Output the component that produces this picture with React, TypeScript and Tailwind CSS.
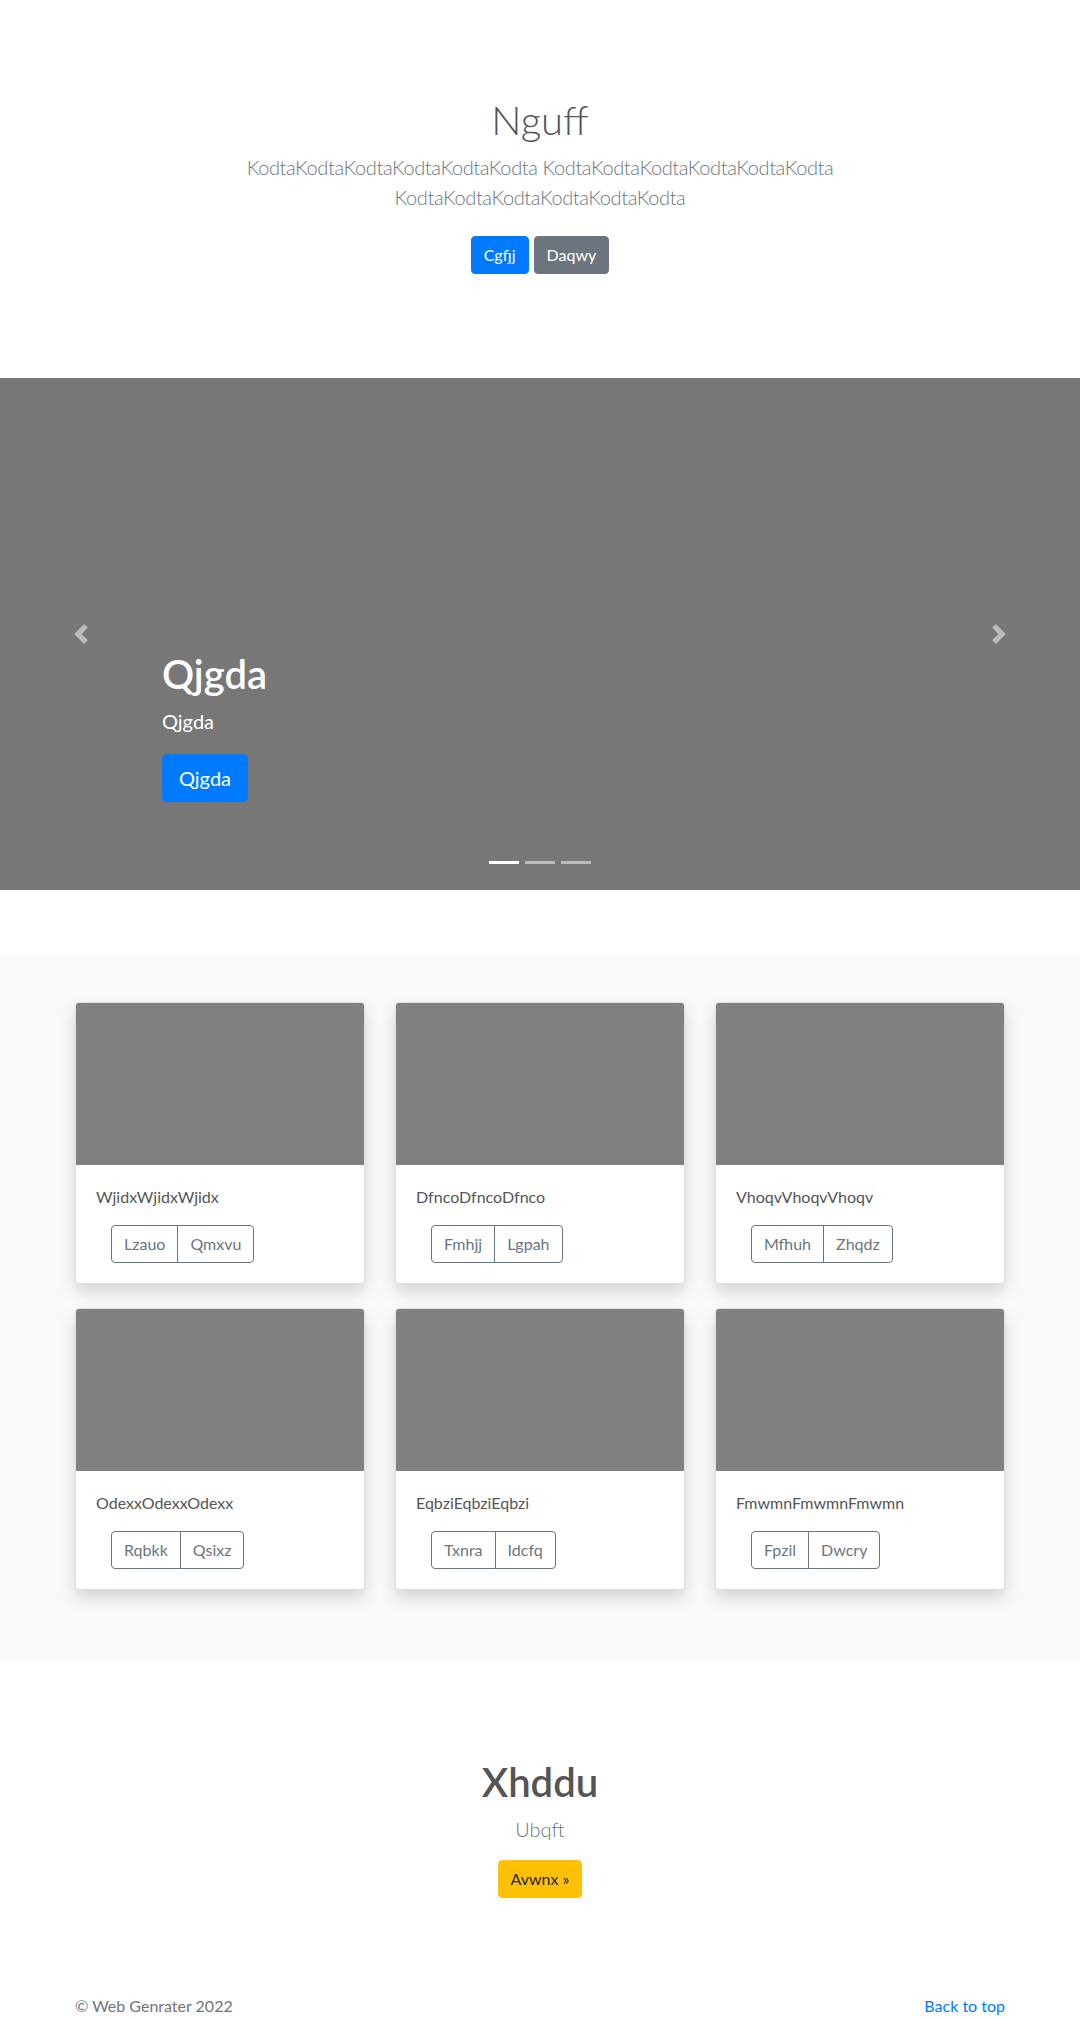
import React from 'react';

const cards = [
  { text: 'WjidxWjidxWjidx', a: 'Lzauo', b: 'Qmxvu' },
  { text: 'DfncoDfncoDfnco', a: 'Fmhjj', b: 'Lgpah' },
  { text: 'VhoqvVhoqvVhoqv', a: 'Mfhuh', b: 'Zhqdz' },
  { text: 'OdexxOdexxOdexx', a: 'Rqbkk', b: 'Qsixz' },
  { text: 'EqbziEqbziEqbzi', a: 'Txnra', b: 'Idcfq' },
  { text: 'FmwmnFmwmnFmwmn', a: 'Fpzil', b: 'Dwcry' },
];

const App: React.FC = () => {
  return (
    <div className="min-h-screen bg-white font-['Lato','Noto_Sans',sans-serif] text-[#212529]">
      {/* Intro */}
      <section className="pt-24 pb-24 text-center">
        <div className="max-w-[680px] mx-auto px-[15px]">
          <h1 className="text-[40px] leading-[48px] font-light text-[#555] mb-2">Nguff</h1>
          <p className="text-[20px] leading-[30px] font-light tracking-[-0.4px] text-[#6c757d] mb-4">
            KodtaKodtaKodtaKodtaKodtaKodta KodtaKodtaKodtaKodtaKodtaKodta KodtaKodtaKodtaKodtaKodtaKodta
          </p>
          <div className="flex justify-center gap-[5px] py-2">
            <a className="px-3 py-[6px] text-[16px] leading-6 rounded-[4px] border border-[#007bff] bg-[#007bff] text-white">Cgfjj</a>
            <a className="px-3 py-[6px] text-[16px] leading-6 rounded-[4px] border border-[#6c757d] bg-[#6c757d] text-white">Daqwy</a>
          </div>
        </div>
      </section>

      {/* Carousel */}
      <section className="relative h-[512px] bg-[#777] mb-16 overflow-hidden">
        <div className="absolute left-0 top-0 bottom-0 w-[15%] flex items-center justify-center opacity-50">
          <svg width="20" height="20" viewBox="0 0 8 8" fill="#fff">
            <path d="M5.25 0l-4 4 4 4 1.5-1.5L4.25 4l2.5-2.5L5.25 0z" />
          </svg>
        </div>
        <div className="absolute right-0 top-0 bottom-0 w-[15%] flex items-center justify-center opacity-50">
          <svg width="20" height="20" viewBox="0 0 8 8" fill="#fff">
            <path d="M2.75 0l-1.5 1.5L3.75 4l-2.5 2.5L2.75 8l4-4-4-4z" />
          </svg>
        </div>
        <div className="absolute left-[15%] right-[15%] bottom-[88px] text-left text-white">
          <h1 className="text-[40px] leading-[48px] font-semibold mb-2">Qjgda</h1>
          <p className="text-[20px] leading-[30px] mb-[18px]">Qjgda</p>
          <a className="inline-block px-4 py-2 text-[20px] leading-[30px] rounded-[5px] border border-[#007bff] bg-[#007bff] text-white">Qjgda</a>
        </div>
        <div className="absolute inset-x-0 bottom-[26px] flex justify-center gap-[6px]">
          <span className="w-[30px] h-[3px] bg-white" />
          <span className="w-[30px] h-[3px] bg-white/50" />
          <span className="w-[30px] h-[3px] bg-white/50" />
        </div>
      </section>

      {/* Album */}
      <section className="bg-[#f8f9fa] pt-12 pb-[72px]">
        <div className="max-w-[960px] mx-auto px-[15px] grid grid-cols-3 gap-x-[30px] gap-y-6">
          {cards.map((c) => (
            <div key={c.text} className="bg-white border border-black/[.125] rounded-[4px] shadow-[0_8px_16px_rgba(0,0,0,0.15)] overflow-hidden">
              <div className="aspect-[16/9] bg-[#808080]" />
              <div className="p-5">
                <p className="text-[16px] leading-6 text-[#555] mb-4">{c.text}</p>
                <div className="pl-[15px]">
                  <div className="inline-flex">
                    <button className="px-3 py-[6px] text-[16px] leading-6 text-[#6c757d] border border-[#6c757d] rounded-l-[4px]">{c.a}</button>
                    <button className="-ml-px px-3 py-[6px] text-[16px] leading-6 text-[#6c757d] border border-[#6c757d] rounded-r-[4px]">{c.b}</button>
                  </div>
                </div>
              </div>
            </div>
          ))}
        </div>
      </section>

      {/* Marketing */}
      <section className="pt-24 pb-12 text-center">
        <h1 className="text-[40px] leading-[48px] font-semibold text-[#555] mb-2">Xhddu</h1>
        <p className="text-[20px] leading-[30px] font-light text-[#6c757d] mb-4">Ubqft</p>
        <a className="inline-block px-3 py-[6px] text-[16px] leading-6 rounded-[4px] border border-[#ffc107] bg-[#ffc107] text-[#212529]">Avwnx »</a>
      </section>

      {/* Footer */}
      <footer className="py-12 text-[#6c757d]">
        <div className="max-w-[960px] mx-auto px-[15px] flex justify-between text-[16px] leading-6">
          <p>© Web Genrater 2022</p>
          <a className="text-[#007bff]">Back to top</a>
        </div>
      </footer>
    </div>
  );
};

export default App;
